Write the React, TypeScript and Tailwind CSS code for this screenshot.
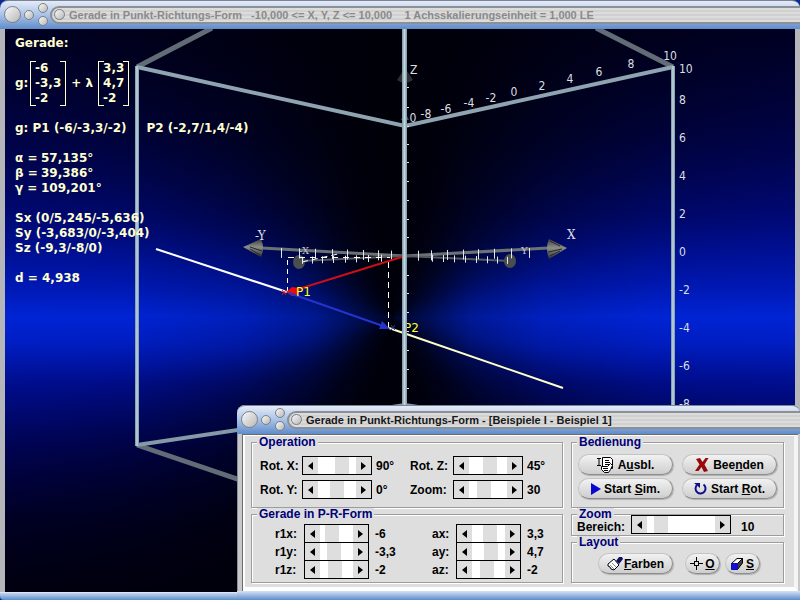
import { useState, type ReactNode } from "react";

const Knob = ({ label, className }: { label: string; className: string }) => (
  <button
    type="button"
    aria-label={label}
    className={`block shrink-0 rounded-full border border-[#7a8088] bg-linear-to-br from-[#f8f8f8] to-[#b8b8b8] ${className}`}
  />
);

const TitleBar = ({ children, active }: { children: ReactNode; active?: boolean }) => (
  <header className="flex h-[29px] shrink-0 items-center rounded-t-lg border-t border-[#7c8494] bg-linear-to-b from-[#e4ebf8] via-[#a9c2e6] to-[#5f8cca] pb-px pl-1">
    <Knob label="Schließen" className="size-[17px]" />
    <Knob label="Minimieren" className="ml-[3px] size-[10px]" />
    <div className="ml-1 flex flex-col gap-[3px]">
      <Knob label="Maximieren" className="size-[10px]" />
      <Knob label="Wiederherstellen" className="size-[10px]" />
    </div>
    <div className="ml-[2px] flex h-[18px] min-w-0 flex-1 items-center rounded-l-full border-2 border-r-0 border-[#8c8f94] bg-[repeating-linear-gradient(#dcdcdc_0_2px,#d0d0d0_2px_4px)] pl-[2px]">
      <Knob label="Menü" className="size-[11px]" />
      <h1
        className={`ml-1 truncate whitespace-pre text-[11px] leading-[14px] font-bold ${
          active ? "text-[#181818]" : "text-[#8a8a8a]"
        }`}
      >
        {children}
      </h1>
    </div>
  </header>
);

const Matrix = ({ rows }: { rows: string[] }) => (
  <div className="relative border-x border-[#ffffd0] px-1">
    <span className="absolute top-0 left-0 h-full w-[5px] border-y border-[#ffffd0]" />
    <span className="absolute top-0 right-0 h-full w-[5px] border-y border-[#ffffd0]" />
    {rows.map((row) => (
      <div key={row}>{row}</div>
    ))}
  </div>
);

const topLabels = [
  { text: "10", x: 670, y: 60 },
  { text: "8", x: 631, y: 68 },
  { text: "6", x: 599, y: 76 },
  { text: "4", x: 570, y: 83 },
  { text: "2", x: 542, y: 90 },
  { text: "0", x: 514, y: 96 },
  { text: "-2", x: 491, y: 102 },
  { text: "-4", x: 469, y: 107 },
  { text: "-6", x: 446, y: 113 },
  { text: "-8", x: 426, y: 118 },
  { text: "0", x: 413, y: 122 },
];

const sideLabels = [
  { text: "10", y: 73 },
  { text: "8", y: 104 },
  { text: "6", y: 142 },
  { text: "4", y: 180 },
  { text: "2", y: 218 },
  { text: "0", y: 256 },
  { text: "-2", y: 294 },
  { text: "-4", y: 332 },
  { text: "-6", y: 370 },
  { text: "-8", y: 408 },
];

const frontTicks = [281, 299, 315, 332, 347, 363, 378, 391, 418, 431, 447, 463, 478, 494, 511, 529];
const backTicks = [302, 312, 322, 333, 345, 356, 368, 381, 432, 443, 454, 465, 476, 487, 497, 507];
const zTicks = [87, 107, 126, 144, 162, 181, 200, 219, 237, 275, 293, 312, 331, 350, 369, 388];

// vertical blue band, darkened in a bow-tie shape around the origin
const Backdrop = () => (
  <>
    <div className="absolute inset-0 bg-[linear-gradient(#000038,#000460_20%,#000a88_34%,#0018b8_45%,#0024d4_51%,#001ec8_56%,#000e98_63%,#000468_74%,#000034_88%,#000018)]" />
    <div className="absolute inset-0 bg-[conic-gradient(from_0deg_at_49%_51.400%,rgb(0_0_8/0.96),rgb(0_0_8/0.86)_20deg,rgb(0_0_8/0.62)_42deg,rgb(0_0_8/0.34)_62deg,rgb(0_0_8/0.1)_78deg,transparent_90deg,rgb(0_0_8/0.1)_102deg,rgb(0_0_8/0.4)_118deg,rgb(0_0_8/0.7)_138deg,rgb(0_0_8/0.9)_160deg,rgb(0_0_8/0.96)_180deg,rgb(0_0_8/0.9)_200deg,rgb(0_0_8/0.7)_222deg,rgb(0_0_8/0.4)_242deg,rgb(0_0_8/0.1)_258deg,transparent_270deg,rgb(0_0_8/0.1)_282deg,rgb(0_0_8/0.34)_298deg,rgb(0_0_8/0.62)_318deg,rgb(0_0_8/0.86)_340deg,rgb(0_0_8/0.96)_360deg)]" />
    <div className="absolute inset-0 bg-[linear-gradient(90deg,transparent_15%,rgb(0_0_8/0.12)_30%,rgb(0_0_8/0.32)_39%,rgb(0_0_8/0.7)_46%,rgb(0_0_8/0.84)_49%,rgb(0_0_8/0.7)_52%,rgb(0_0_8/0.3)_59%,rgb(0_0_8/0.1)_68%,transparent_82%)]" />
  </>
);

const Scene = () => (
  <svg
    viewBox="5 29 790 563"
    preserveAspectRatio="xMidYMid slice"
    className="absolute inset-0 size-full"
    role="img"
    aria-label="Gerade im Koordinatensystem"
  >
    <defs>
      <linearGradient id="pole" x1="0" y1="0" x2="1" y2="0">
        <stop offset="0" stopColor="#7a919e" />
        <stop offset="0.5" stopColor="#c0d8e2" />
        <stop offset="1" stopColor="#7a919e" />
      </linearGradient>
      <linearGradient id="cone" x1="0" y1="0" x2="0" y2="1">
        <stop offset="0" stopColor="#3c3e3e" />
        <stop offset="0.45" stopColor="#8c8e88" />
        <stop offset="1" stopColor="#2c2e2e" />
      </linearGradient>
    </defs>

    {/* box edges behind the axes */}
    <g strokeWidth="5" fill="none">
      <path d="M137 67 212 28M673 67 596 28M137 445 290 497" stroke="#626c76" />
      <path d="M137 445 405 405 673 445" stroke="#8599a6" strokeWidth="4" />
      <path d="M137 67 405 126 673 67" stroke="#8fa3b0" strokeWidth="4" />
    </g>

    <path d="M405 68 413 80 Q405 86 397 80Z" fill="#2e3030" />
    <path d="M405 112 409 120 401 120Z" fill="#505454" />

    {/* axes */}
    <g stroke="#6b7275" strokeWidth="3">
      <path d="M262 248 405 256M405 256 548 248" />
      <path d="M300 261 405 256M405 256 511 261" strokeWidth="2" stroke="#565c5e" />
    </g>
    <ellipse cx="299" cy="262" rx="6" ry="7" fill="#4a4e4e" />
    <ellipse cx="510" cy="261" rx="6" ry="7" fill="#4a4e4e" />
    <path d="M243 247 261 239 Q265 248 261 257Z" fill="url(#cone)" />
    <path d="M567 248 549 239 Q545 248 549 259Z" fill="url(#cone)" />
    <path d="M550 241 560 246M548 252 562 249M550 256 560 251M262 251 250 247M260 255 250 249" stroke="#24282a" strokeWidth="1" />
    <g stroke="#e4e8ec" strokeWidth="1">
      {frontTicks.map((x) => (
        <path key={x} d={`M${x}.5 ${251 - Math.abs(x - 405) / 40}v10`} />
      ))}
      {backTicks.map((x) => (
        <path key={x} d={`M${x}.5 ${254 + Math.abs(x - 405) / 36}v7`} />
      ))}
      {zTicks.map((y) => (
        <path key={y} d={`M407 ${y}.5h2`} />
      ))}
    </g>

    <g stroke="#fff" strokeWidth="1" fill="none">
      <path d="M287.5 292V258" strokeDasharray="5 4" />
      <path d="M388.5 328V258" strokeDasharray="6 4" />
      <path d="M288 257.500H390" strokeDasharray="6 5" />
      <path d="M302 262 338 254" strokeDasharray="6 4" />
    </g>

    {/* line and direction vectors */}
    <path d="M156 249 287 292" stroke="#fff" strokeWidth="2" />
    <path d="M389 328 563 388" stroke="#ffffc8" strokeWidth="2" />
    <path d="M405 256 292 291" stroke="#c81018" strokeWidth="2" />
    <path d="M286 292 292 287 298 288 298 295 292 296Z" fill="#e80c10" />
    <path d="M282 290 286 295M282 295 286 290" stroke="#e80c10" strokeWidth="1" />
    <path d="M289 293 383 326" stroke="#2434cc" strokeWidth="2" />
    <path d="M390 329 382 321 379 329Z" fill="#2434cc" />
    <path d="M391 325 395 330M391 330 395 325" stroke="#3038a0" strokeWidth="1" />

    <g fill="#ffff20" className="font-['DejaVu_Sans'] text-[12px]">
      <text x="296" y="296">P1</text>
      <text x="404" y="332">P2</text>
    </g>

    {/* front poles */}
    <rect x="135" y="66" width="4" height="380" fill="url(#pole)" />
    <rect x="671" y="66" width="4" height="380" fill="url(#pole)" />
    <rect x="402" y="28" width="5" height="380" fill="url(#pole)" />

    <g fill="#dcdee2" className="font-['DejaVu_Sans_Condensed','DejaVu_Sans',sans-serif] text-[12px]">
      {topLabels.map((l) => (
        <text key={l.x} x={l.x} y={l.y} textAnchor="middle">
          {l.text}
        </text>
      ))}
      {sideLabels.map((l) => (
        <text key={l.y} x="679" y={l.y}>
          {l.text}
        </text>
      ))}
      <text x="410" y="74">Z</text>
    </g>
    <g fill="#dcdee2" className="font-['DejaVu_Serif',serif] text-[12px]">
      <text x="255" y="240">-Y</text>
      <text x="567" y="239">X</text>
    </g>
    <g fill="#c4c8d0" className="font-['DejaVu_Serif',serif] text-[10px]">
      <text x="299" y="254">-X</text>
      <text x="521" y="254">Y</text>
    </g>
  </svg>
);

type ScrollerProps = { id: string; start: number; label: string; className: string };

const Scroller = ({ id, start, label, className }: ScrollerProps) => {
  const [value, setValue] = useState(start);
  const step = (by: number) => setValue((v) => Math.min(100, Math.max(0, v + by)));

  return (
    <div className={`flex h-[19px] shrink-0 border border-black bg-white ${className}`}>
      <button
        type="button"
        aria-label={`${label} verringern`}
        onClick={() => step(-1)}
        className="flex w-[15px] shrink-0 items-center justify-center bg-[#dedede]"
      >
        <svg viewBox="0 0 5 8" className="h-2 w-[5px]">
          <path d="M5 0V8L0 4Z" />
        </svg>
      </button>
      <input
        id={id}
        type="range"
        min={0}
        max={100}
        value={value}
        onChange={(e) => setValue(Number(e.target.value))}
        className="h-full w-0 min-w-0 flex-1 appearance-none bg-white [&::-webkit-slider-thumb]:h-[17px] [&::-webkit-slider-thumb]:w-[14px] [&::-webkit-slider-thumb]:appearance-none [&::-webkit-slider-thumb]:bg-[#dedede]"
      />
      <button
        type="button"
        aria-label={`${label} erhöhen`}
        onClick={() => step(1)}
        className="flex w-[15px] shrink-0 items-center justify-center bg-[#dedede]"
      >
        <svg viewBox="0 0 5 8" className="h-2 w-[5px]">
          <path d="M0 0V8L5 4Z" />
        </svg>
      </button>
    </div>
  );
};

const Group = ({ title, children }: { title: string; children: ReactNode }) => (
  <fieldset className="min-w-0 border border-[#9c9c9c] shadow-[1px_1px_0_#fff,inset_1px_1px_0_#fff]">
    <legend className="ml-[5px] bg-[#dedede] px-[2px] text-[12px] leading-[12px] text-[#000078]">{title}</legend>
    {children}
  </fieldset>
);

const PillButton = ({ children, className }: { children: ReactNode; className: string }) => (
  <button
    type="button"
    className={`flex h-[21px] items-center justify-center rounded-full border border-[#c4c4c4] border-r-[#8c8c8c] border-b-[#8c8c8c] bg-linear-to-b from-[#f2f2f2] to-[#cecece] shadow-[1px_1px_1px_#b0b0b0] ${className}`}
  >
    {children}
  </button>
);

const rotations = [
  [
    { id: "rotx", label: "Rot. X:", start: 71, value: "90°" },
    { id: "rotz", label: "Rot. Z:", start: 58, value: "45°" },
  ],
  [
    { id: "roty", label: "Rot. Y:", start: 50, value: "0°" },
    { id: "zoom", label: "Zoom:", start: 33, value: "30" },
  ],
];

const vectors = [
  [
    { id: "r1x", label: "r1x:", start: 27, value: "-6" },
    { id: "ax", label: "ax:", start: 60, value: "3,3" },
  ],
  [
    { id: "r1y", label: "r1y:", start: 36, value: "-3,3" },
    { id: "ay", label: "ay:", start: 65, value: "4,7" },
  ],
  [
    { id: "r1z", label: "r1z:", start: 40, value: "-2" },
    { id: "az", label: "az:", start: 40, value: "-2" },
  ],
];

const ControlWindow = () => (
  <section className="absolute right-0 bottom-0 flex w-[563px] max-w-full flex-col rounded-t-lg bg-[#c6c8cc]">
    <TitleBar active>Gerade in Punkt-Richtungs-Form - [Beispiele I - Beispiel 1]</TitleBar>
    <div className="border-l border-[#8c9098] pr-[2px] pl-1">
      <div className="border-t border-l border-[#6c6c6c]">
        <div className="flex gap-2 border-4 border-t border-l-2 border-white border-r-[#f4f4f4] bg-[#dedede] pr-[10px] pb-1 pl-[6px] text-[12px] leading-[14px] font-bold">
          <div className="min-w-0 flex-1">
            <Group title="Operation">
              <div className="flex flex-col gap-[5px] pt-2 pb-2 pl-2">
                {rotations.map((row) => (
                  <div key={row[0].id} className="grid grid-cols-[42px_70px_38px_43px_70px_1fr] items-center">
                    {row.map((c) => (
                      <div key={c.id} className="contents">
                        <label htmlFor={c.id}>{c.label}</label>
                        <Scroller id={c.id} label={c.label} start={c.start} className="w-[70px]" />
                        <output htmlFor={c.id} className="pl-1">
                          {c.value}
                        </output>
                      </div>
                    ))}
                  </div>
                ))}
              </div>
            </Group>
            <Group title="Gerade in P-R-Form">
              <div className="pt-1 pb-[3px] pl-[23px]">
                {vectors.map((row) => (
                  <div
                    key={row[0].id}
                    className="-mt-px grid grid-cols-[29px_65px_63px_24px_65px_1fr] items-center first:mt-0"
                  >
                    {row.map((c) => (
                      <div key={c.id} className="contents">
                        <label htmlFor={c.id}>{c.label}</label>
                        <Scroller id={c.id} label={c.label} start={c.start} className="w-[65px]" />
                        <output htmlFor={c.id} className="pl-[6px]">
                          {c.value}
                        </output>
                      </div>
                    ))}
                  </div>
                ))}
              </div>
            </Group>
          </div>

          <div className="w-[213px] shrink-0">
            <Group title="Bedienung">
              <div className="grid grid-cols-2 gap-x-[9px] gap-y-[3px] px-[6px] pt-[6px] pb-2">
                <PillButton className="gap-1">
                  <svg viewBox="0 0 17 16" className="h-4 w-[17px]" fill="none" stroke="#000">
                    <path d="M5.500.5h8l2 2v9h-10z" fill="#fff" />
                    <path d="M8 3.500h4M8 5.500h5M8 7.500h5M0 1.500h4M2 1.500v7M0 8.500h4" />
                    <path d="M4.500 9.500h6l3-3 2 2-2 4-2 3h-4l-3-3z" fill="#fff" />
                    <path d="M6 11.500h5M7 13.500h4" />
                  </svg>
                  <span>
                    A<u>u</u>sbl.
                  </span>
                </PillButton>
                <PillButton className="gap-1">
                  <svg viewBox="0 0 14 14" className="size-[14px]">
                    <path d="M1 1 5 0 7.500 4 10.500 0 13.500 0 9.500 6.500 13 13 9 14 6.500 9 3.500 13 0 13 4.500 6.500Z" fill="#980808" />
                  </svg>
                  <span>
                    Bee<u>n</u>den
                  </span>
                </PillButton>
                <PillButton className="gap-[3px]">
                  <svg viewBox="0 0 10 12" className="h-3 w-[10px]">
                    <path d="M0 0 10 6 0 12Z" fill="#0808d0" />
                  </svg>
                  <span>
                    Start <u>S</u>im.
                  </span>
                </PillButton>
                <PillButton className="gap-1">
                  <svg viewBox="0 0 13 13" className="size-[13px]">
                    <path d="M9.500 2.500A5 5 0 1 1 3 3" fill="none" stroke="#10108c" strokeWidth="2" />
                    <path d="M0 1h6v5z" fill="#10108c" />
                  </svg>
                  <span>
                    Start <u>R</u>ot.
                  </span>
                </PillButton>
              </div>
            </Group>
            <Group title="Zoom">
              <div className="-mt-[5px] flex items-end pb-px pl-[5px]">
                <label htmlFor="bereich" className="w-[54px]">
                  Bereich:
                </label>
                <Scroller id="bereich" label="Bereich" start={13} className="w-[100px]" />
                <output htmlFor="bereich" className="pl-[10px]">
                  10
                </output>
              </div>
            </Group>
            <Group title="Layout">
              <div className="flex pt-[5px] pb-2 pl-[26px]">
                <PillButton className="w-[75px] gap-px">
                  <svg viewBox="0 0 16 14" className="h-[14px] w-4" fill="none">
                    <path d="M1 7 7 2 12 8 7 13 4 12 3 10 1 9Z" fill="#fff" stroke="#000" />
                    <path d="M5 6l4 4M3 8l4 4" stroke="#888" />
                    <path d="M9 4 12 0 15 0 16 2 12 7Z" fill="#101060" />
                  </svg>
                  <span>
                    <u>F</u>arben
                  </span>
                </PillButton>
                <PillButton className="ml-3 w-[35px] gap-[2px]">
                  <svg viewBox="0 0 13 13" className="size-[13px]" fill="none" stroke="#000">
                    <path d="M6.500 0v4M6.500 9v4M0 6.500h4M9 6.500h4" />
                    <rect x="4.500" y="4.500" width="4" height="4" />
                  </svg>
                  <u>O</u>
                </PillButton>
                <PillButton className="ml-[5px] w-[35px] gap-[3px]">
                  <svg viewBox="0 0 12 12" className="size-3" stroke="#000">
                    <path d="M.5 5.500 6 .5h5.500L6.500 5.500Z" fill="#fff" />
                    <path d="M6.500 5.500 11.500.5V5l-5 6.500Z" fill="#404040" />
                    <path d="M.5 5.500h6v6h-6z" fill="#1010e0" stroke="#1010a0" />
                  </svg>
                  <u>S</u>
                </PillButton>
              </div>
            </Group>
          </div>
        </div>
      </div>
    </div>
    <div className="h-[9px] bg-linear-to-b from-[#d4e2f6] to-[#5f8cca]" />
  </section>
);

export default function App() {
  return (
    <div className="relative flex min-h-screen flex-col bg-[#0a2a9c] font-['Liberation_Sans',Arial,sans-serif]">
      <TitleBar>
        {"Gerade in Punkt-Richtungs-Form   -10,000 <= X, Y, Z <= 10,000    1 Achsskalierungseinheit = 1,000 LE"}
      </TitleBar>
      <main className="relative flex-1 overflow-hidden border-x-[5px] border-[#b4b6ba] bg-black">
        <Backdrop />
        <Scene />
        <div className="relative pt-[7px] pl-[10px] font-['DejaVu_Sans',sans-serif] text-[12px] leading-[15px] font-bold text-[#ffffd0]">
          <h2>Gerade:</h2>
          <div className="mt-[10px] flex items-center">
            <span className="w-[15px]">g:</span>
            <Matrix rows={["-6", "-3,3", "-2"]} />
            <span className="mx-[5px]">+ λ</span>
            <Matrix rows={["3,3", "4,7", "-2"]} />
          </div>
          <p className="mt-[15px] flex gap-5">
            <span>g: P1 (-6/-3,3/-2)</span>
            <span>P2 (-2,7/1,4/-4)</span>
          </p>
          <dl className="mt-[15px] grid grid-cols-[26px_1fr]">
            <dt>α =</dt>
            <dd>57,135°</dd>
            <dt>β =</dt>
            <dd>39,386°</dd>
            <dt>γ =</dt>
            <dd>109,201°</dd>
          </dl>
          <p className="mt-[15px]">Sx (0/5,245/-5,636)</p>
          <p>Sy (-3,683/0/-3,404)</p>
          <p>Sz (-9,3/-8/0)</p>
          <p className="mt-[15px]">d = 4,938</p>
        </div>
      </main>
      <footer className="h-2 shrink-0 rounded-b border-t border-[#dce6f6] bg-linear-to-b from-[#c4d6f0] to-[#5f8cca]" />
      <ControlWindow />
    </div>
  );
}
